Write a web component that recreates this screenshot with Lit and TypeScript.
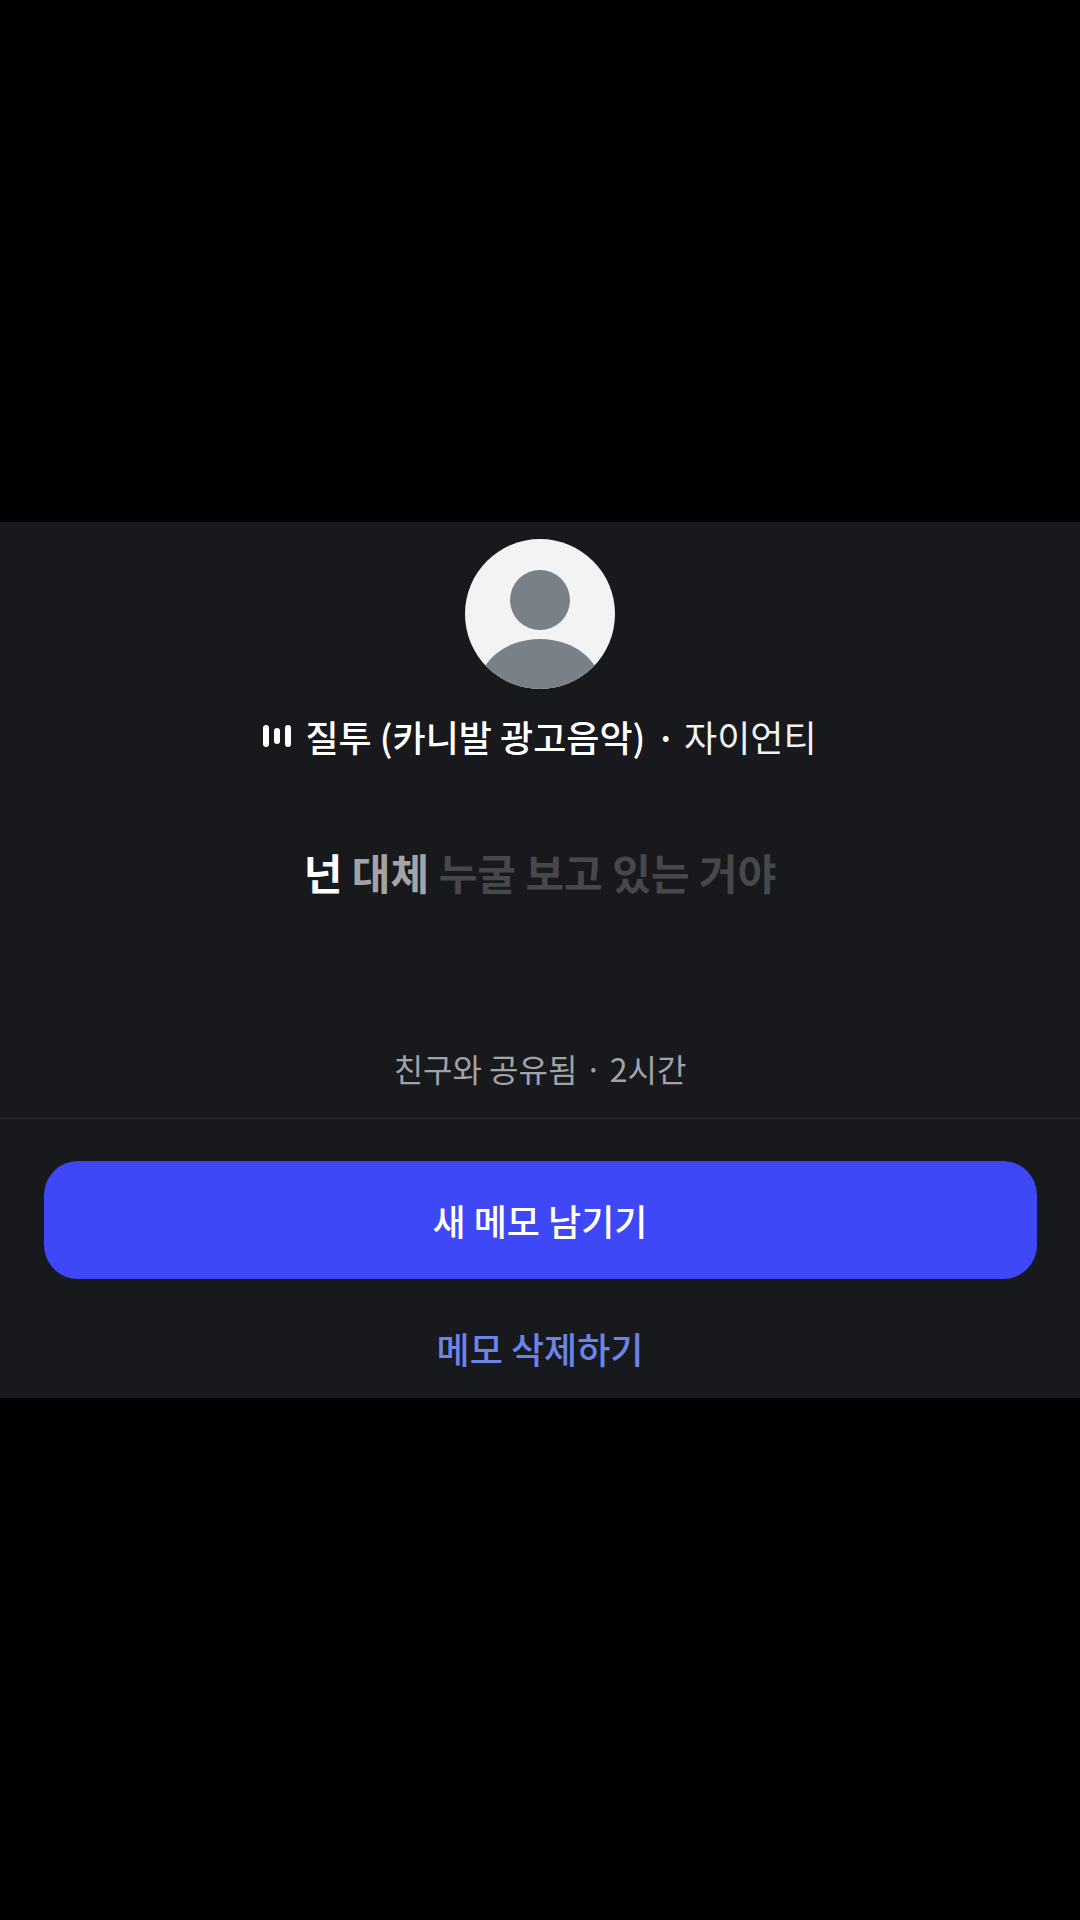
import { LitElement, html, css } from "lit";
import { customElement } from "lit/decorators.js";

@customElement("app-root")
export class AppRoot extends LitElement {
  static styles = css`
    :host {
      display: flex;
      flex-direction: column;
      height: 1920px;
      background: #000;
      font-family: "Noto Sans CJK KR", "Noto Sans", sans-serif;
    }
    .sheet {
      margin-top: 522px;
      height: 876px;
      background: #17191d;
      display: flex;
      flex-direction: column;
      align-items: center;
      box-sizing: border-box;
      padding-top: 17px;
    }
    .avatar { width: 150px; height: 150px; display: block; flex: none; }
    .track {
      margin-top: 24px;
      height: 46px;
      display: flex;
      align-items: center;
      color: #fff;
      font-size: 36px;
      line-height: 46px;
      white-space: nowrap;
    }
    .eq { width: 28px; height: 22px; margin-right: 14px; flex: none; }
    .name { font-weight: 500; }
    .dot { margin: 0 8px 0 10px; font-weight: 500; }
    .artist { font-weight: 400; color: #f2f2f3; }
    .lyric {
      margin-top: 88px;
      font-size: 42px;
      line-height: 50px;
      font-weight: 700;
      color: #47484b;
      white-space: nowrap;
    }
    .now { color: #fff; }
    .mid { color: #a3a4a6; }
    .meta {
      margin-top: 150px;
      font-size: 32px;
      line-height: 42px;
      color: #a1a3a6;
      white-space: nowrap;
    }
    .rule {
      margin-top: 29px;
      width: 100%;
      height: 1px;
      background: #2a2c30;
      flex: none;
    }
    .primary {
      margin-top: 42px;
      width: 993px;
      height: 118px;
      flex: none;
      border: 0;
      border-radius: 34px;
      background: #3e48f6;
      color: #fff;
      font: inherit;
      font-size: 36px;
      font-weight: 500;
      padding: 0;
    }
    .secondary {
      margin-top: 46px;
      border: 0;
      background: none;
      padding: 0;
      color: #6c84e8;
      font: inherit;
      font-size: 36px;
      line-height: 46px;
      font-weight: 500;
    }
  `;

  render() {
    return html`
      <div class="sheet">
        <svg class="avatar" viewBox="0 0 150 150" aria-hidden="true">
          <defs><clipPath id="c"><circle cx="75" cy="75" r="75"></circle></clipPath></defs>
          <g clip-path="url(#c)">
            <rect width="150" height="150" fill="#f1f3f5"></rect>
            <ellipse cx="75" cy="61" rx="30" ry="30" fill="#7a8087"></ellipse>
            <ellipse cx="75" cy="150" rx="62" ry="50" fill="#7a8087"></ellipse>
          </g>
        </svg>
        <div class="track">
          <svg class="eq" viewBox="0 0 28 22" aria-hidden="true">
            <rect x="0" y="0" width="6" height="22" rx="3" fill="#fff"></rect>
            <rect x="11" y="3" width="6" height="16" rx="3" fill="#fff"></rect>
            <rect x="22" y="0" width="6" height="22" rx="3" fill="#fff"></rect>
          </svg>
          <span class="name">질투 (카니발 광고음악)</span>
          <span class="dot">·</span>
          <span class="artist">자이언티</span>
        </div>
        <div class="lyric"><span class="now">넌</span> <span class="mid">대체</span> 누굴 보고 있는 거야</div>
        <div class="meta">친구와 공유됨 · 2시간</div>
        <div class="rule"></div>
        <button class="primary">새 메모 남기기</button>
        <button class="secondary">메모 삭제하기</button>
      </div>
    `;
  }
}
